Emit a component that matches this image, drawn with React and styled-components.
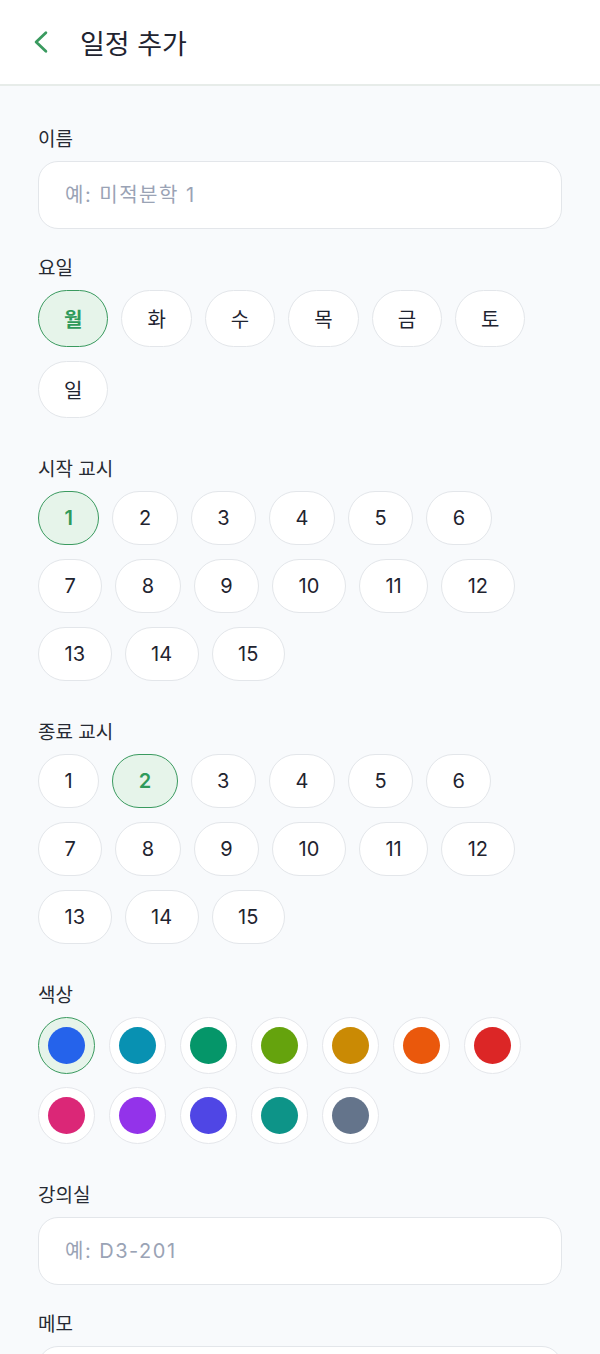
import React, { useState } from 'react';
import styled, { createGlobalStyle } from 'styled-components';

const GlobalStyle = createGlobalStyle`
  body {
    margin: 0;
    background: #f8fafc;
    font-family: Inter, "Noto Sans CJK KR", sans-serif;
    color: #1f2430;
  }
`;

const Page = styled.div`
  min-height: 100vh;
  background: #f8fafc;
`;

const Header = styled.header`
  height: 86px;
  display: flex;
  align-items: center;
  gap: 26px;
  padding: 0 28px;
  background: #ffffff;
  border-bottom: 2px solid #e7ece9;
  box-sizing: border-box;
`;

const BackButton = styled.button`
  width: 26px;
  height: 26px;
  border: none;
  background: none;
  padding: 0;
  display: flex;
  align-items: center;
  justify-content: center;
  color: #3a9a5f;
  cursor: pointer;
`;

const Title = styled.h1`
  margin: 0;
  font-size: 27px;
  font-weight: 400;
  color: #1f2430;
`;

const Form = styled.div`
  padding: 42px 38px 0;
`;

const Section = styled.section`
  margin-bottom: ${(p) => (p.$loose ? '40px' : '28px')};
`;

const Label = styled.div`
  font-size: 19px;
  line-height: 24px;
  color: #262a33;
  margin-bottom: 9px;
`;

const Input = styled.input`
  display: block;
  width: 100%;
  box-sizing: border-box;
  height: 68px;
  border: 1px solid #e3e6ea;
  border-radius: 20px;
  background: #ffffff;
  padding: 0 26px;
  font-family: Inter, "Noto Sans CJK KR", sans-serif;
  font-size: 20px;
  letter-spacing: 1.5px;
  color: #1f2430;
  outline: none;

  &::placeholder {
    color: #9aa3b5;
  }
`;

const ChipGroup = styled.div`
  display: flex;
  flex-wrap: wrap;
  column-gap: 13px;
  row-gap: 14px;
`;

const Chip = styled.button`
  box-sizing: border-box;
  height: ${(p) => (p.$tall ? '57px' : '54px')};
  display: flex;
  align-items: center;
  justify-content: center;
  border: 1px solid ${(p) => (p.$active ? '#3a9a5f' : '#e3e6ea')};
  background: ${(p) => (p.$active ? '#e6f4ea' : '#ffffff')};
  color: ${(p) => (p.$active ? '#2f9a5a' : '#1f2430')};
  font-family: Inter, "Noto Sans CJK KR", sans-serif;
  font-size: 20px;
  font-weight: ${(p) => (p.$active ? 600 : 400)};
  padding: 0 ${(p) => (p.$tall ? '25px' : '25.5px')};
  border-radius: 999px;
  cursor: pointer;
`;

const Swatches = styled.div`
  display: flex;
  flex-wrap: wrap;
  column-gap: 14px;
  row-gap: 13px;
`;

const Swatch = styled.button`
  width: 57px;
  height: 57px;
  box-sizing: border-box;
  border-radius: 50%;
  border: 1px solid ${(p) => (p.$active ? '#3a9a5f' : '#e5e7eb')};
  background: ${(p) => (p.$active ? '#e6f4ea' : '#ffffff')};
  display: flex;
  align-items: center;
  justify-content: center;
  padding: 0;
  cursor: pointer;
`;

const Dot = styled.span`
  width: 37px;
  height: 37px;
  border-radius: 50%;
  background: ${(p) => p.$color};
`;

const DAYS = ['월', '화', '수', '목', '금', '토', '일'];
const PERIODS = Array.from({ length: 15 }, (_, i) => i + 1);
const COLORS = [
  '#2563eb', '#0891b2', '#059669', '#65a30d', '#ca8a04', '#ea580c', '#dc2626',
  '#db2777', '#9333ea', '#4f46e5', '#0d9488', '#64748b',
];

const PeriodPicker = ({ value, onPick }) => (
  <ChipGroup>
    {PERIODS.map((n) => (
      <Chip key={n} $active={value === n} onClick={() => onPick(n)}>
        {n}
      </Chip>
    ))}
  </ChipGroup>
);

const App = () => {
  const [day, setDay] = useState('월');
  const [start, setStart] = useState(1);
  const [end, setEnd] = useState(2);
  const [color, setColor] = useState(COLORS[0]);

  return (
    <Page>
      <GlobalStyle />
      <Header>
        <BackButton aria-label="뒤로">
          <svg width="26" height="26" viewBox="0 0 24 24" fill="none" stroke="currentColor" strokeWidth="2.6" strokeLinecap="round" strokeLinejoin="round">
            <path d="M16.5 3.5 L7.5 12 L16.5 20.5" />
          </svg>
        </BackButton>
        <Title>일정 추가</Title>
      </Header>

      <Form>
        <Section>
          <Label>이름</Label>
          <Input placeholder="예: 미적분학 1" />
        </Section>

        <Section $loose>
          <Label>요일</Label>
          <ChipGroup>
            {DAYS.map((d) => (
              <Chip key={d} $tall $active={day === d} onClick={() => setDay(d)}>
                {d}
              </Chip>
            ))}
          </ChipGroup>
        </Section>

        <Section $loose>
          <Label>시작 교시</Label>
          <PeriodPicker value={start} onPick={setStart} />
        </Section>

        <Section $loose>
          <Label>종료 교시</Label>
          <PeriodPicker value={end} onPick={setEnd} />
        </Section>

        <Section $loose>
          <Label>색상</Label>
          <Swatches>
            {COLORS.map((c) => (
              <Swatch key={c} $active={color === c} onClick={() => setColor(c)}>
                <Dot $color={c} />
              </Swatch>
            ))}
          </Swatches>
        </Section>

        <Section>
          <Label>강의실</Label>
          <Input placeholder="예: D3-201" />
        </Section>

        <Section>
          <Label>메모</Label>
          <Input placeholder="" />
        </Section>
      </Form>
    </Page>
  );
};

export default App;
